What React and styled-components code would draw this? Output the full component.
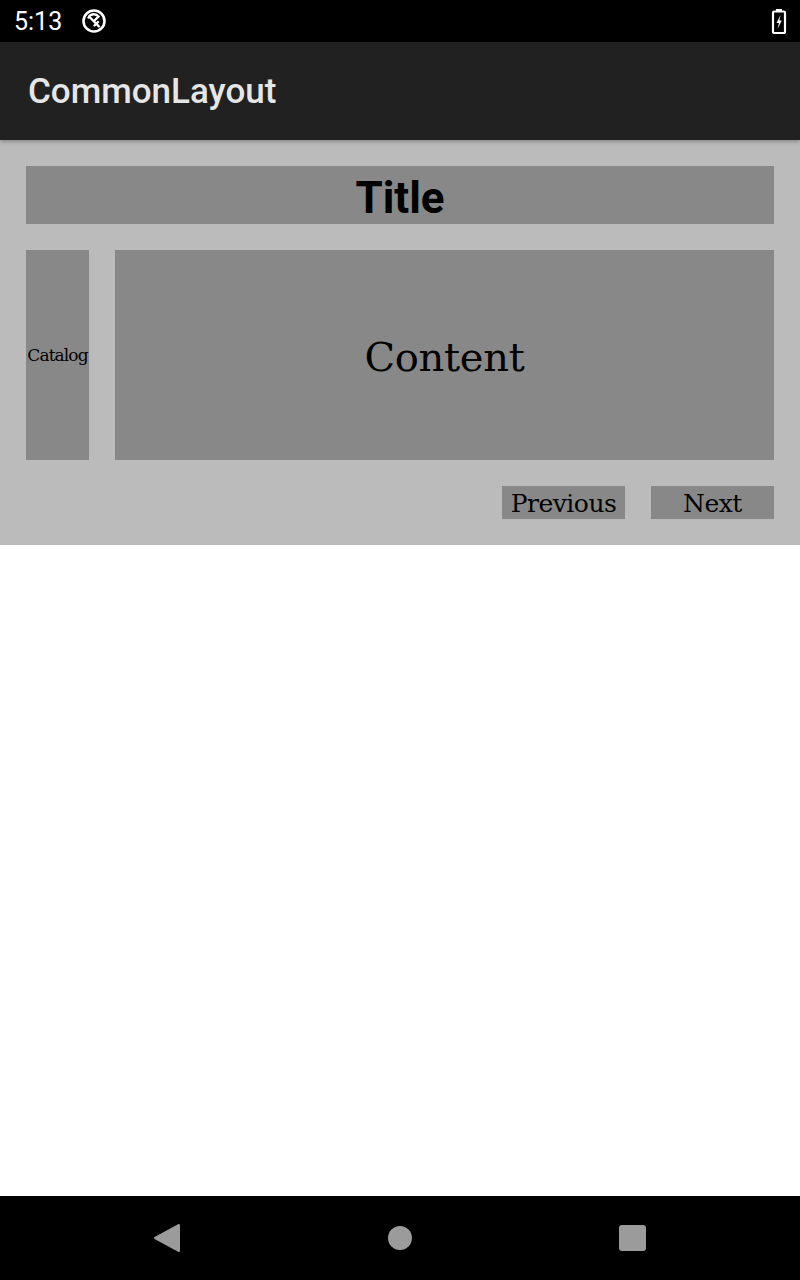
import styled, { createGlobalStyle } from 'styled-components';

const GlobalStyle = createGlobalStyle`
  html, body {
    margin: 0;
    padding: 0;
    background: #ffffff;
  }
  body {
    font-family: Roboto, "Noto Sans", sans-serif;
  }
`;

const Screen = styled.div`
  width: 800px;
  height: 1280px;
  display: flex;
  flex-direction: column;
  background: #ffffff;
  overflow: hidden;
`;

const StatusBar = styled.div`
  height: 42px;
  background: #000000;
  display: flex;
  align-items: center;
  padding: 0 13px 0 14px;
  color: #ffffff;
  font-family: Roboto, sans-serif;
  font-size: 25px;
`;

const Clock = styled.span`
  margin-right: 19px;
  margin-top: 1px;
`;

const Spacer = styled.div`
  flex: 1;
`;

const AppBar = styled.header`
  height: 98px;
  background: #212121;
  display: flex;
  align-items: center;
  padding: 0 28px;
  color: #e6e6e6;
  font-family: Roboto, sans-serif;
  font-size: 35px;
  font-weight: 500;
  position: relative;
  z-index: 1;
  box-shadow: 0 2px 4px rgba(0, 0, 0, 0.25);
`;

const Layout = styled.main`
  background: #bbbbbb;
  padding: 26px;
  display: flex;
  flex-direction: column;
  gap: 26px;
`;

const Block = styled.div`
  background: #888888;
  color: #000000;
  display: flex;
  align-items: center;
  justify-content: center;
  box-sizing: border-box;
`;

const TitleBox = styled(Block)`
  height: 58px;
  padding-top: 5px;
  font-family: Roboto, sans-serif;
  font-weight: 700;
  font-size: 44px;
`;

const Row = styled.div`
  display: flex;
  gap: 26px;
  height: 210px;
`;

const Serif = `"DejaVu Serif", "Liberation Serif", serif`;

const Catalog = styled(Block)`
  width: 63px;
  font-family: ${Serif};
  font-size: 17px;
  letter-spacing: -0.9px;
  white-space: nowrap;
  overflow: visible;
`;

const Content = styled(Block)`
  flex: 1;
  font-family: ${Serif};
  font-size: 40px;
  letter-spacing: -0.3px;
  padding-top: 4px;
`;

const Actions = styled.div`
  display: flex;
  justify-content: flex-end;
  gap: 26px;
`;

const Button = styled(Block)`
  width: 123px;
  height: 33px;
  font-family: ${Serif};
  font-size: 25px;
  letter-spacing: -0.5px;
  padding-top: 2px;
`;

const Fill = styled.div`
  flex: 1;
  background: #ffffff;
`;

const NavBar = styled.nav`
  height: 84px;
  background: #000000;
  display: flex;
  align-items: center;
  gap: 206px;
  padding-left: 153px;
`;

const NavIcon = styled.svg`
  display: block;
`;

const App = () => {
  return (
    <Screen>
      <GlobalStyle />
      <StatusBar>
        <Clock>5:13</Clock>
        <svg width="26" height="26" viewBox="0 0 26 26">
          <circle cx="13" cy="13" r="10.5" fill="none" stroke="#fff" strokeWidth="2.6" />
          <path
            d="M7.5 9.5 A6 6 0 0 1 17.5 8.5 L14 12 M8 8.5 L18 18.5 M13.5 17.5 L17 14"
            fill="none"
            stroke="#fff"
            strokeWidth="2.4"
            strokeLinecap="round"
          />
        </svg>
        <Spacer />
        <svg width="16" height="26" viewBox="0 0 16 26">
          <rect x="5" y="1" width="6" height="3" fill="#fff" />
          <rect x="2" y="3.5" width="12" height="21.5" rx="1.2" fill="none" stroke="#fff" strokeWidth="2.2" />
          <path d="M9.5 7 L5.5 15 L8 15 L6.5 21 L10.8 12.5 L8.3 12.5 Z" fill="#fff" />
        </svg>
      </StatusBar>
      <AppBar>CommonLayout</AppBar>
      <Layout>
        <TitleBox>Title</TitleBox>
        <Row>
          <Catalog>Catalog</Catalog>
          <Content>Content</Content>
        </Row>
        <Actions>
          <Button>Previous</Button>
          <Button>Next</Button>
        </Actions>
      </Layout>
      <Fill />
      <NavBar>
        <NavIcon width="28" height="30" viewBox="0 0 28 30">
          <path d="M26 2 L26 28 L2 15 Z" fill="#9b9b9b" stroke="#9b9b9b" strokeWidth="2" strokeLinejoin="round" />
        </NavIcon>
        <NavIcon width="26" height="26" viewBox="0 0 26 26">
          <circle cx="13" cy="13" r="12" fill="#9b9b9b" />
        </NavIcon>
        <NavIcon width="27" height="27" viewBox="0 0 27 27">
          <rect x="0" y="0" width="27" height="26" rx="3" fill="#9b9b9b" />
        </NavIcon>
      </NavBar>
    </Screen>
  );
};

export default App;
